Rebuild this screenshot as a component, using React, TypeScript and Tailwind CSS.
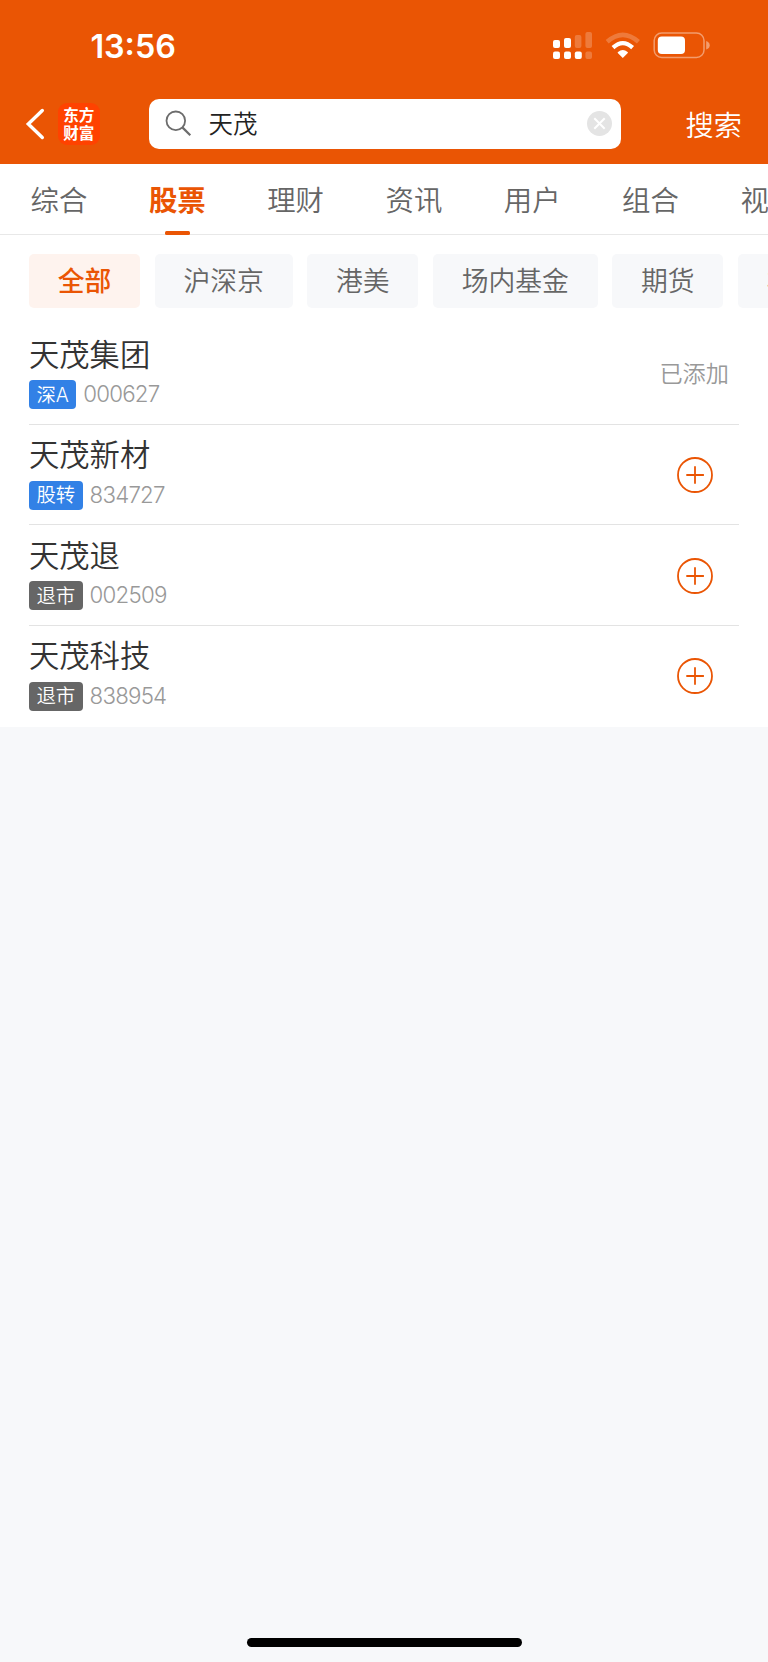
const tabs = ['综合', '股票', '理财', '资讯', '用户', '组合', '视频'];
const filters = ['全部', '沪深京', '港美', '场内基金', '期货', '板块'];

type Stock = { name: string; tag: string; code: string; delisted?: boolean; added?: boolean };

const stocks: Stock[] = [
  { name: '天茂集团', tag: '深A', code: '000627', added: true },
  { name: '天茂新材', tag: '股转', code: '834727' },
  { name: '天茂退', tag: '退市', code: '002509', delisted: true },
  { name: '天茂科技', tag: '退市', code: '838954', delisted: true },
];

function StatusIcons() {
  return (
    <svg width="160" height="34" viewBox="550 28 160 34" fill="none">
      <g fill="#fff">
        <rect x="553" y="40" width="7" height="8" rx="2" />
        <rect x="564" y="38" width="7" height="10" rx="2" />
        <rect x="553" y="51.5" width="7" height="7.5" rx="2" />
        <rect x="564" y="51.5" width="7" height="7.5" rx="2" />
        <rect x="574.8" y="51.5" width="7" height="7.5" rx="2" />
        <g opacity="0.22">
          <rect x="574.8" y="35" width="6.6" height="13" rx="2" />
          <rect x="585.4" y="32" width="6.6" height="16" rx="2" />
          <rect x="585.4" y="51.5" width="6.6" height="7.5" rx="2" />
        </g>
        <path d="M622.8 58 L617.8 52.9 Q617.4 52.4 618 52 Q622.8 48 627.6 52 Q628.2 52.4 627.8 52.9 Z" />
      </g>
      <path d="M613 47.6 Q622.8 38.6 632.6 47.6" stroke="#fff" strokeWidth="4.2" />
      <path d="M607.2 41.7 Q622.8 27.9 638.4 41.7" stroke="#fff" strokeOpacity="0.22" strokeWidth="4.5" />
      <rect x="654.2" y="33" width="49.8" height="24.5" rx="7.5" stroke="#fff" strokeOpacity="0.42" strokeWidth="1.5" />
      <rect x="657.8" y="36.5" width="27.2" height="17.5" rx="4" fill="#fff" />
      <path d="M706.2 41 Q709.7 42.2 709.7 45.3 Q709.7 48.4 706.2 49.6 Z" fill="#fff" fillOpacity="0.42" />
    </svg>
  );
}

function Header() {
  return (
    <header className="h-[163.5px] shrink-0 bg-[#ea5504] text-white">
      <div className="flex h-[93px] items-start pl-[90.4px]">
        <div className="mt-[27px] w-[459.6px] font-['Inter'] text-[32.3px] leading-[40px] font-semibold">13:56</div>
        <div className="mt-[28px]">
          <StatusIcons />
        </div>
      </div>
      <div className="flex items-center pt-[5.5px] pl-[25px]">
        <svg width="22" height="34" viewBox="0 0 22 34" fill="none" stroke="#fff" strokeWidth="3.4" strokeLinecap="round">
          <path d="M17.3 3.5 L3.3 17 L17.3 30.5" strokeLinejoin="miter" />
        </svg>
        <div className="ml-[10.5px] flex h-[42.5px] w-[42.5px] flex-col items-center justify-center rounded-[9px] bg-[#ff4200] pb-[1px] font-['Noto_Sans_CJK_SC',sans-serif] text-[15.6px] leading-[18px] font-bold">
          <span>东方</span>
          <span>财富</span>
        </div>
        <div className="ml-[48.5px] flex h-[50.5px] w-[472px] items-center rounded-[10px] bg-white pr-[9px] pl-[16px]">
          <svg width="27" height="27" viewBox="0 0 27 27" fill="none" stroke="#6c6c6c" strokeWidth="1.8">
            <circle cx="10.8" cy="10.8" r="9.3" />
            <path d="M17.6 17.6 L25.3 25.3" strokeWidth="2.2" />
          </svg>
          <span className="ml-[17px] flex-1 pt-[2px] text-[24.5px] leading-[36px] text-[#222]">天茂</span>
          <svg width="25" height="25" viewBox="0 0 25 25" fill="none">
            <circle cx="12.5" cy="12.5" r="12.5" fill="#e4e4e4" />
            <path d="M7.3 7.3 L17.7 17.7 M17.7 7.3 L7.3 17.7" stroke="#fff" strokeWidth="2" />
          </svg>
        </div>
        <span className="ml-[65px] pt-[4.5px] text-[28.2px] leading-[40px] whitespace-nowrap">搜索</span>
      </div>
    </header>
  );
}

function AddIcon() {
  return (
    <svg width="36" height="36" viewBox="0 0 36 36" fill="none" stroke="#ea5504" strokeWidth="1.8">
      <circle cx="18" cy="18" r="17" />
      <path d="M9.3 18 H26.9 M18 9.2 V26.8" />
    </svg>
  );
}

function StockRow({ stock, last }: { stock: Stock; last: boolean }) {
  return (
    <li
      className={`mr-[29px] ml-[29px] flex h-[100.5px] justify-between ${last ? '' : 'border-b border-[#e3e3e3]'}`}
    >
      <div className="pt-[10.5px]">
        <div className="h-[45.5px] text-[30.3px] leading-[42px] text-[#333]">{stock.name}</div>
        <div className="flex items-center">
          <span
            className={`flex h-[29px] items-center rounded-[4px] px-[7.4px] font-['Inter','Noto_Sans_CJK_SC',sans-serif] text-[19.4px] leading-[28px] text-white ${
              stock.delisted ? 'bg-[#666]' : 'bg-[#3281e6]'
            }`}
          >
            {stock.tag}
          </span>
          <span className="ml-[7px] pb-[1px] font-['Inter',sans-serif] text-[22.3px] leading-[28px] font-light tracking-[-0.035em] text-[#999]">
            {stock.code}
          </span>
        </div>
      </div>
      {stock.added ? (
        <span className="pt-[34px] pr-[10px] text-[23.2px] leading-[32px] text-[#999]">已添加</span>
      ) : (
        <span className="pt-[32.5px] pr-[26.5px]">
          <AddIcon />
        </span>
      )}
    </li>
  );
}

export default function App() {
  return (
    <div className="flex h-[1662px] w-[768px] flex-col overflow-hidden bg-[#f7f8fa] font-['Liberation_Sans','Noto_Sans_CJK_SC',sans-serif] font-[350]">
      <Header />
      <main className="h-[563.5px] shrink-0 overflow-hidden bg-white">
        <nav className="flex h-[71px] gap-[61.3px] border-b border-[#e8e8e8] pl-[30.5px]">
          {tabs.map((tab) => (
            <div
              key={tab}
              className={`flex w-[57px] shrink-0 flex-col items-center text-[28.4px] leading-[40px] whitespace-nowrap ${
                tab === '股票' ? 'font-bold text-[#ea5504]' : 'text-[#666]'
              }`}
            >
              <span className="mt-[17px] h-[50.5px] shrink-0">{tab}</span>
              {tab === '股票' && <span className="h-[4px] w-[25px] shrink-0 rounded-[1.5px] bg-[#ea5504]" />}
            </div>
          ))}
        </nav>
        <div className="flex gap-[14.5px] pt-[19.5px] pl-[29px]">
          {filters.map((filter) => (
            <div
              key={filter}
              className={`flex h-[53.5px] shrink-0 items-center rounded-[5px] px-[28.8px] pt-[2px] text-[26.8px] leading-[40px] whitespace-nowrap ${
                filter === '全部' ? 'bg-[#fef3ee] font-medium text-[#ea5504]' : 'bg-[#f7f8fa] text-[#666]'
              }`}
            >
              {filter}
            </div>
          ))}
        </div>
        <ul className="pt-[16.5px]">
          {stocks.map((stock, i) => (
            <StockRow key={stock.code} stock={stock} last={i === stocks.length - 1} />
          ))}
        </ul>
      </main>
      <div className="mt-auto mb-[15px] h-[9px] w-[275px] shrink-0 self-center rounded-full bg-black" />
    </div>
  );
}
